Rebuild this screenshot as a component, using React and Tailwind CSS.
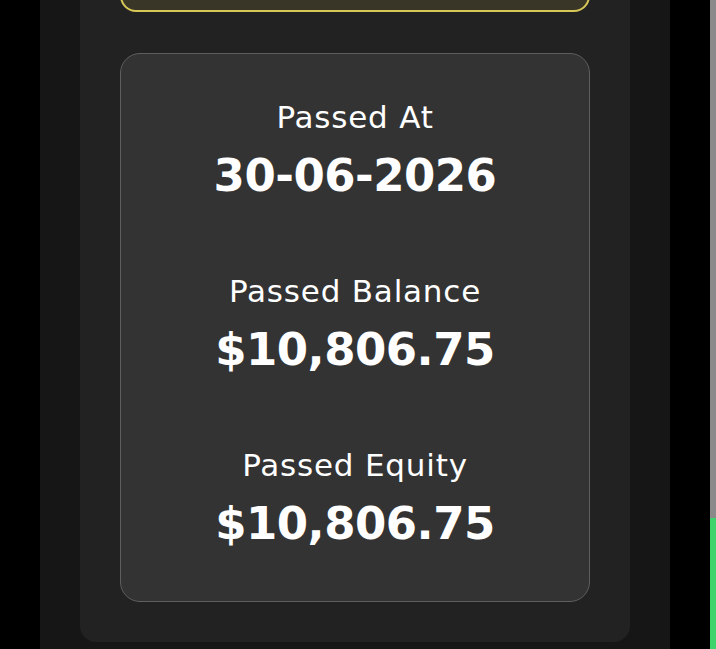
export default function App() {
    const stats = [
        { label: 'Passed At', value: '30-06-2026' },
        { label: 'Passed Balance', value: '$10,806.75' },
        { label: 'Passed Equity', value: '$10,806.75' },
    ];

    return (
        <div className="flex h-[649px] w-[716px] overflow-hidden bg-black">
            <div className="w-[40px] shrink-0 bg-black" />

            {/* Main column */}
            <div className="w-[630px] shrink-0 bg-[#161616] px-[40px]">
                <div className="-mt-[48px] flex flex-col gap-[41px] rounded-b-2xl bg-[#222222] px-[40px] pb-[40px]">
                    {/* Rule banner, scrolled mostly out of view */}
                    <div className="h-[60px] rounded-2xl border-2 border-[#d6c757] bg-[#3a3627]" />

                    {/* Passed stats */}
                    <div
                        className="flex flex-col items-center gap-[72px] rounded-[20px] border-[1.5px] border-[#5e5e5e] bg-[#333333] pt-[45px] pb-[52px] text-white"
                        style={{ fontFamily: '"DejaVu Sans", sans-serif' }}
                    >
                        {stats.map((s) => (
                            <div key={s.label} className="flex flex-col items-center gap-[16px]">
                                <p className="text-[31px] leading-[36px] font-normal tracking-[0.8px]">{s.label}</p>
                                <p className="text-[45px] leading-[50px] font-bold tracking-[-0.5px]">{s.value}</p>
                            </div>
                        ))}
                    </div>
                </div>
            </div>

            <div className="w-[40px] shrink-0 bg-black" />

            {/* Scrollbar */}
            <div className="flex w-[6px] shrink-0 flex-col">
                <div className="h-[518px] bg-[#8a8a8a]" />
                <div className="flex-1 bg-[#3ed46b]" />
            </div>
        </div>
    );
}
